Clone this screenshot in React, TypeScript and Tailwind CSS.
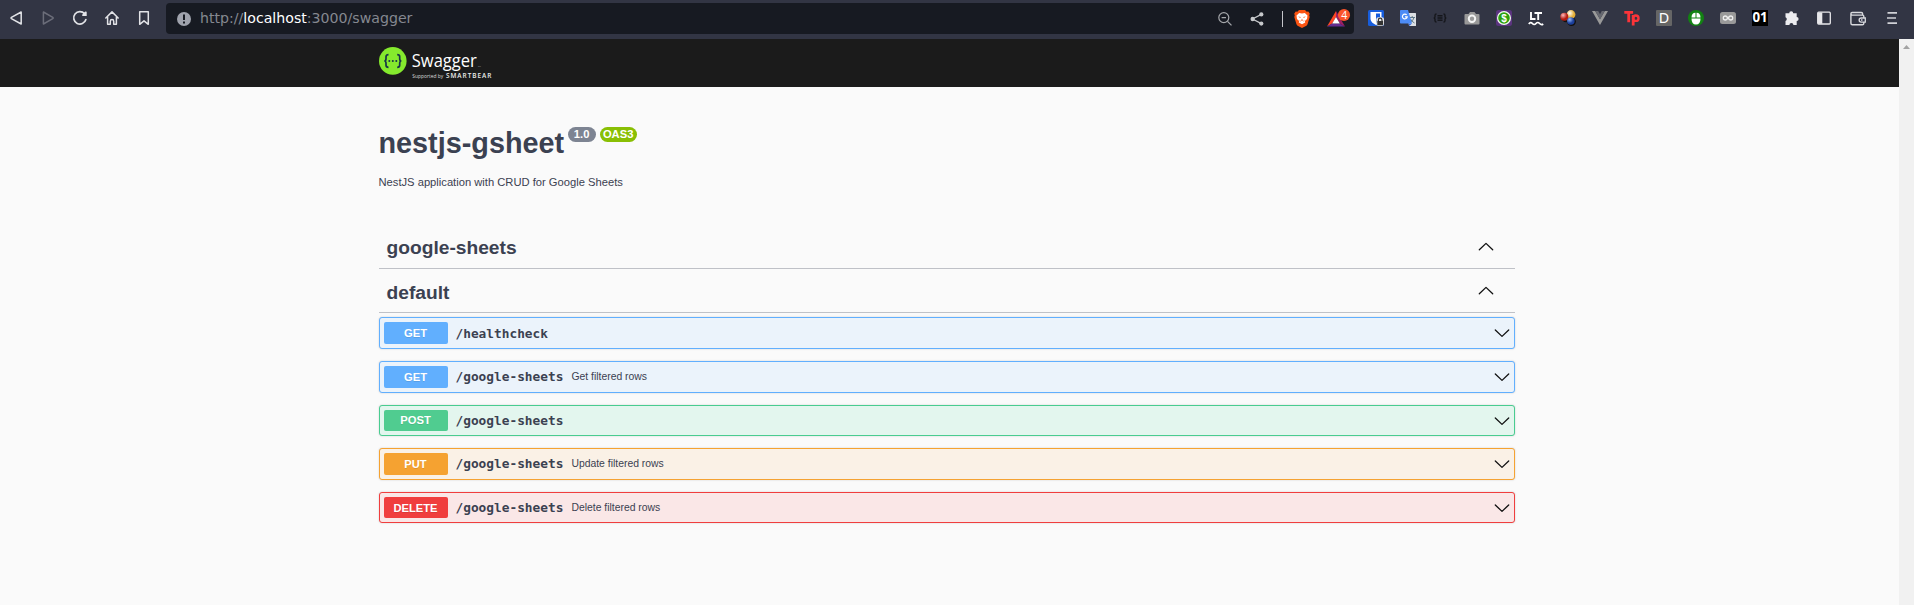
import React from "react";

type Operation = {
  method: string;
  path: string;
  summary?: string;
  row: string;
  badge: string;
  pathOffset?: string;
};

const operations: Operation[] = [
  { method: "GET", path: "/healthcheck", row: "h-8 mb-3 border-[#61affe] bg-[#ebf3fb]", badge: "h-[22px] bg-[#61affe]", pathOffset: "pt-[2px]" },
  { method: "GET", path: "/google-sheets", summary: "Get filtered rows", row: "h-8 mb-3 border-[#61affe] bg-[#ebf3fb]", badge: "h-[22px] bg-[#61affe]" },
  { method: "POST", path: "/google-sheets", row: "h-[31px] mb-3 border-[#49cc90] bg-[#e3f6ee]", badge: "h-[21px] pb-px bg-[#50cc90]" },
  { method: "PUT", path: "/google-sheets", summary: "Update filtered rows", row: "h-8 mb-3 border-[#f5a231] bg-[#faf1e6]", badge: "h-[22px] bg-[#f5a231]" },
  { method: "DELETE", path: "/google-sheets", summary: "Delete filtered rows", row: "h-[31px] border-[#f03e3e] bg-[#fae7e7]", badge: "h-[21px] bg-[#f03e3e]" },
];

function Cell({ children, className = "w-8" }: { children: React.ReactNode; className?: string }) {
  return <span className={`flex h-9 shrink-0 items-center justify-center ${className}`}>{children}</span>;
}

function Svg({ children, size = 16, box = 16 }: { children: React.ReactNode; size?: number; box?: number }) {
  return (
    <svg width={size} height={size} viewBox={`0 0 ${box} ${box}`} fill="none" className="block shrink-0">
      {children}
    </svg>
  );
}

function Chevron({ up = false }: { up?: boolean }) {
  return (
    <svg width="16" height="16" viewBox="0 0 16 16" fill="none" className="block shrink-0">
      <path d={up ? "M1.3 10.8 8 4.4l6.7 6.4" : "M1.3 5 8 11.4l6.7-6.4"} stroke="#111" strokeWidth="1.3" strokeLinejoin="round" strokeLinecap="round" />
    </svg>
  );
}

function NavButtons() {
  const s = { stroke: "#e2e3e7", strokeWidth: 1.5, strokeLinejoin: "round" as const, strokeLinecap: "round" as const };
  return (
    <div className="flex">
      <Cell>
        <Svg><path d="M13.2 2v12L3.4 8.6a.7.7 0 0 1 0-1.2Z" {...s} /></Svg>
      </Cell>
      <Cell>
        <Svg><path d="M3.4 2v12l9.4-5.4a.7.7 0 0 0 0-1.2Z" {...s} stroke="#6b6d79" /></Svg>
      </Cell>
      <Cell>
        <Svg>
          <path d="M13.9 9.6A6.2 6.2 0 1 1 12.6 3.8" {...s} strokeWidth="1.7" />
          <path d="M14.7 1.8v4.3h-3.6a1 1 0 0 1-.7-1.7l1.3-1.5 1.5-1.3Z" fill="#e2e3e7" />
        </Svg>
      </Cell>
      <Cell>
        <Svg><path d="M1.8 8 8 1.9 14.2 8M3.6 7.3v6.9h2.7v-2.9a1.7 1.7 0 0 1 3.4 0v2.9h2.7V7.3" {...s} /></Svg>
      </Cell>
      <Cell>
        <Svg><path d="M3.7 1.7h8.6v12.6L8 10.8l-4.3 3.5Z" {...s} /></Svg>
      </Cell>
    </div>
  );
}

function BraveIcon() {
  return (
    <svg width="16" height="18" viewBox="0 0 16 18" className="block">
      <path d="M5 0h6l1.7 1.8 1.6-.2 1.5 2.1-.6 1.5.5 1.7-2.1 7.2q-.4 1-1.2 1.6L8 18l-4.4-2.3q-.8-.6-1.2-1.6L.3 6.9l.5-1.7-.6-1.5 1.5-2.1 1.6.2Z" fill="#fb5412" />
      <path d="M5.2 3 8 3.5l2.800-.5 2.700 2.500-.5 3.600-2.100 2 .3 1.300L8 14.200l-3.200-1.800.3-1.300-2.100-2-.5-3.600Z" fill="#fff" />
      <path d="m4.200 6.600 2.500.4-.5 1.100Zm7.600 0-2.500.4.5 1.100ZM8 8.400l.8 2.100-.8.5-.8-.5ZM5.600 9.900l1.300 1.400-1 .3Zm4.800 0-1.300 1.400 1 .3Z" fill="#fb5412" />
    </svg>
  );
}

function AddressBar() {
  return (
    <div className="mt-[3px] ml-[6px] flex h-[31px] w-[1188px] items-center rounded-[4px] bg-[#171a22]">
      <svg width="14" height="14" viewBox="0 0 14 14" className="mr-[9px] ml-[11px] block shrink-0">
        <circle cx="7" cy="7" r="7" fill="#a0a3ad" />
        <path d="M6 2.5h2v5.4H6ZM6 9.4h2v2H6Z" fill="#171a22" />
      </svg>
      <span className="pb-[2px] font-['DejaVu_Sans',sans-serif] text-[14.15px] leading-[28px] whitespace-nowrap text-[#858890]">
        http://<span className="text-white">localhost</span>:3000/swagger
      </span>
      <div className="ml-auto flex items-center pr-[1px]">
        <Cell>
          <Svg>
            <circle cx="6.8" cy="6.6" r="5" stroke="#a5a7ab" strokeWidth="1.2" />
            <path d="m10.5 10.4 4 4M4.6 6.6H9" stroke="#a5a7ab" strokeWidth="1.3" />
          </Svg>
        </Cell>
        <Cell>
          <Svg>
            <path d="M12.4 3.4 3.5 8l8.9 4.6" stroke="#c6c8cb" strokeWidth="1.2" />
            <circle cx="12.3" cy="3.4" r="2.1" fill="#c6c8cb" />
            <circle cx="3.7" cy="8" r="2.2" fill="#c6c8cb" />
            <circle cx="12.3" cy="12.6" r="2.1" fill="#c6c8cb" />
          </Svg>
        </Cell>
        <span className="ml-[9px] h-4 w-px bg-[#c4c5ca]" />
        <Cell className="w-[38px]"><BraveIcon /></Cell>
        <Cell className="w-[32px]">
          <svg width="26" height="20" viewBox="-2 0 26 20" className="block overflow-visible">
            <path d="M10 2 1 17.500l5.200-3L10 8Z" fill="#ff4724" />
            <path d="M1 17.500h18l-5.200-3H6.200Z" fill="#662d91" />
            <path d="m10 2 9 15.500-5.200-3L10 8Z" fill="#9e1f63" />
            <path d="M10 8 13.800 14.500H6.200Z" fill="#fff" />
            <circle cx="18" cy="6" r="6.1" fill="#fb542b" />
            <text x="18.2" y="9.600" textAnchor="middle" fill="#fff" fontSize="10.500" fontFamily="Open Sans, sans-serif">4</text>
          </svg>
        </Cell>
      </div>
    </div>
  );
}

function Extensions() {
  return (
    <div className="ml-[6px] flex">
      <Cell>
        <Svg>
          <rect width="16" height="16" rx="1.5" fill="#175ddc" />
          <path d="M2.5 2h11v7c0 2.5-2.5 4.5-5.5 6C5 13.5 2.5 11.5 2.5 9Z" fill="#fff" />
          <path d="M8 3.5h4V9c0 1.5-2 3-4 4Z" fill="#175ddc" />
          <rect x="8.3" y="7.2" width="7.7" height="8.8" rx="2" fill="#e8e8e8" />
          <path d="M10.4 11.5V10a1.8 1.8 0 0 1 3.6 0v1.5" stroke="#333" strokeWidth="1.2" />
          <rect x="9.3" y="11" width="5.8" height="4.3" fill="#333" />
        </Svg>
      </Cell>
      <Cell>
        <Svg>
          <path d="M7 3h8.5q.5 0 .5.5V15.5q0 .5-.5.5H9Z" fill="#dcdfe3" />
          <path d="M9.5 7.5h5.5M12.2 6v1.5M14 7.5q-.5 3-4 5M10.5 9q1 2.5 4 4" stroke="#607988" strokeWidth="1" />
          <path d="m8.5 13.5 3.5 0L9.3 16Z" fill="#3367d6" />
          <path d="M.8 0H8l4 13.5H.8Q0 13.5 0 12.7V.8Q0 0 .8 0Z" fill="#4c8bf5" />
          <path d="M6.700 5A2.400 2.400 0 1 0 7.200 6.800H5" stroke="#fff" strokeWidth="1.200" />
        </Svg>
      </Cell>
      <Cell>
        <Svg>
          <path d="M4.5 4q-1.500 0-1.500 1.300v1.400Q3 8 1.700 8 3 8 3 9.300v1.400Q3 12 4.500 12M11.500 4q1.500 0 1.500 1.300v1.400Q13 8 14.300 8 13 8 13 9.300v1.400q0 1.300-1.500 1.300M5.500 5.800h5M5.500 8h5M5.500 10.200h5" stroke="#15161b" strokeWidth="1.400" />
        </Svg>
      </Cell>
      <Cell>
        <Svg>
          <path d="M1.500 4h3L6 2h4.500L12 4h2.500q1 0 1 1v8.500q0 1-1 1h-13q-1 0-1-1V5q0-1 1-1Z" fill="#999" />
          <circle cx="8" cy="8.800" r="3.200" stroke="#f4f4f4" strokeWidth="2" fill="#999" />
        </Svg>
      </Cell>
      <Cell>
        <Svg>
          <rect width="16" height="16" rx="2.500" fill="#5b347f" />
          <circle cx="8" cy="8" r="6.400" fill="#2da10b" stroke="#f5faf5" strokeWidth="1.200" />
          <text x="8" y="11.500" textAnchor="middle" fill="#fff" fontSize="10" fontWeight="700" fontFamily="Liberation Sans, sans-serif">$</text>
        </Svg>
      </Cell>
      <Cell>
        <Svg>
          <path d="M3 2v7h4.500M6.500 3H14M10.200 3v7" stroke="#fff" strokeWidth="1.900" />
          <path d="M.8 14q1.800-2.500 3.600-.5t3.600 0 3.600 0 3.600.5" stroke="#fff" strokeWidth="1.700" />
        </Svg>
      </Cell>
      <Cell>
        <Svg>
          <defs>
            <radialGradient id="yellow" cx="35%" cy="35%"><stop stopColor="#fff" /><stop offset="1" stopColor="#e5ae35" /></radialGradient>
            <radialGradient id="red" cx="35%" cy="30%"><stop stopColor="#fbb" /><stop offset="1" stopColor="#b51c11" /></radialGradient>
            <radialGradient id="blue" cx="35%" cy="30%"><stop stopColor="#9bbcf7" /><stop offset="1" stopColor="#1b3f9c" /></radialGradient>
          </defs>
          <circle cx="6" cy="8" r="4.300" fill="#111" />
          <circle cx="11.500" cy="11.600" r="4.400" fill="#111" />
          <circle cx="11" cy="4.500" r="4.400" fill="url(#yellow)" />
          <circle cx="4.300" cy="6.800" r="4" fill="url(#red)" />
          <circle cx="10.800" cy="11" r="3.800" fill="url(#blue)" />
        </Svg>
      </Cell>
      <Cell>
        <Svg>
          <path d="M0 1h3.200L8 9.300 12.800 1H16L8 15Z" fill="#999" />
          <path d="M3.200 1h3L8 4.200 9.800 1h3L8 9.300Z" fill="#666870" />
        </Svg>
      </Cell>
      <Cell>
        <Svg>
          <path d="M.3 2.400h8.800M4.700 2.400v9.800M9.200 5v10.500" stroke="#fb3439" strokeWidth="2.800" />
          <circle cx="11.800" cy="8.200" r="2.700" stroke="#fb3439" strokeWidth="2.400" />
        </Svg>
      </Cell>
      <Cell>
        <span className="flex h-4 w-4 items-center justify-center rounded-[1px] bg-[#666] font-['DejaVu_Sans',sans-serif] text-[13.5px] leading-4 text-white">D</span>
      </Cell>
      <Cell>
        <Svg>
          <circle cx="8" cy="8" r="8" fill="#128212" />
          <path d="M3.500 7.400Q3.500 3 7.500 2.800v4.600ZM8.500 2.800q4 .2 4 4.600h-4ZM3.500 8.400h9q0 6-4.500 6t-4.500-6Z" fill="#fff" />
        </Svg>
      </Cell>
      <Cell>
        <Svg>
          <rect y="2" width="16" height="12" rx="2.500" fill="#999" />
          <path d="M8 8C6.500 6 5.600 6 5.300 6a2 2 0 0 0 0 4C5.600 10 6.500 10 8 8s2.400-2 2.700-2a2 2 0 0 1 0 4C10.400 10 9.500 10 8 8Z" stroke="#eee" strokeWidth="1.300" />
        </Svg>
      </Cell>
      <Cell>
        <span className="flex h-4 w-4 items-center justify-center bg-black pb-[2px] font-['Noto_Sans',sans-serif] text-[13.3px] leading-[14px] font-bold text-white">01</span>
      </Cell>
      <Cell>
        <Svg>
          <path d="M5.200 3.300a2 2 0 1 1 4 0h3.500v3.800a1.900 1.900 0 1 1 0 3.800v4H9.400a2 2 0 0 0-4 0H1.500v-4a1.900 1.900 0 0 0 0-3.600v-4Z" fill="#ececef" />
        </Svg>
      </Cell>
      <Cell>
        <Svg>
          <rect x="1.700" y="2.200" width="12.600" height="11.800" rx="1" stroke="#e7e7ea" strokeWidth="1.300" />
          <path d="M2 2.500h4.300v11.300H2Z" fill="#e7e7ea" />
        </Svg>
      </Cell>
      <Cell className="w-9">
        <Svg>
          <path d="M.9 3.700v9.600q0 1.500 1.500 1.500h10q1.400 0 1.400-1.400V6.300q0-1.200-1.200-1.200H2.300Q.9 5.100.9 3.700q0-1.200 1.200-1.200h9.200q1.300 0 1.300 1.300v1.300" stroke="#d8d9dd" strokeWidth="1.400" />
          <path d="M15.300 8h-4.100a2 2 0 0 0 0 4.100h4.100Z" fill="#32354a" stroke="#d8d9dd" strokeWidth="1.300" />
          <path d="M11 10h1.500" stroke="#d8d9dd" strokeWidth="1.300" />
        </Svg>
      </Cell>
      <Cell>
        <Svg><path d="M3.500 2.800H13M3 8h9M3.500 13.200H13" stroke="#d0d1d6" strokeWidth="1.700" /></Svg>
      </Cell>
    </div>
  );
}

function Logo() {
  return (
    <svg width="114" height="34" viewBox="0 0 114 34" className="block">
      <circle cx="13.800" cy="13.900" r="13.800" fill="#85ea2d" />
      <g stroke="#173647" strokeWidth="1.700" fill="none">
        <path d="M9.500 7.700q-2.500 0-2.500 2v2q0 2.300-1.700 2.300 1.700 0 1.700 2.300v2q0 2 2.500 2M18.200 7.700q2.500 0 2.500 2v2q0 2.300 1.700 2.300-1.700 0-1.700 2.300v2q0 2-2.500 2" />
      </g>
      <g fill="#173647"><circle cx="10.300" cy="14" r="1" /><circle cx="13.800" cy="14" r="1" /><circle cx="17.300" cy="14" r="1" /></g>
      <g fill="#fff" fontFamily="Open Sans, sans-serif">
        <text x="32.800" y="20" fontSize="18.500" fontWeight="400" textLength="65" lengthAdjust="spacingAndGlyphs">Swagger</text>
        <text x="99" y="19.500" fontSize="2" fill="#aaa">TM</text>
        <text x="33.300" y="30.600" fontSize="5.800" textLength="31" lengthAdjust="spacingAndGlyphs" fill="#ddd">Supported by</text>
        <text x="67" y="30.600" fontSize="6.400" fontWeight="600" textLength="45.300" lengthAdjust="spacing" fill="#eee">SMARTBEAR</text>
      </g>
    </svg>
  );
}

export default function App() {
  return (
    <div className="flex h-[605px] w-[1914px] flex-col overflow-hidden bg-[#fafafa] font-['Liberation_Sans',Arial,sans-serif] text-[#3b4151]">
      <header className="flex h-[39px] shrink-0 bg-[#323544]">
        <NavButtons />
        <AddressBar />
        <Extensions />
      </header>

      <div className="flex flex-1">
        <main className="flex w-[1899px] flex-col">
          <div className="h-12 bg-[#1b1b1b] pt-2 pl-[379px]">
            <Logo />
          </div>

          <div className="ml-[378.5px] w-[1136px]">
            <section className="pt-[38px]">
              <div className="flex items-start">
                <h1 className="text-[28.8px] leading-9 font-bold whitespace-nowrap">nestjs-gsheet</h1>
                <span className="mt-[2px] ml-[3.5px] flex h-[15px] w-7 items-center justify-center rounded-full bg-[#7d8492] text-[11.2px] leading-[15px] font-bold text-white">1.0</span>
                <span className="mt-[2px] ml-1 flex h-[15px] w-[37px] items-center justify-center rounded-full bg-[#89bf04] text-[11.2px] leading-[15px] font-bold text-white">OAS3</span>
              </div>
              <p className="mt-[13px] text-[11.2px] leading-4">NestJS application with CRUD for Google Sheets</p>
            </section>

            <section className="mt-[35px]">
              <h2 className="flex h-[44px] items-center border-b border-[#bfc1c7] pr-[21px] pl-2 text-[19.2px] leading-6 font-bold">
                <span className="flex-1 pt-[2px]">google-sheets</span>
                <Chevron up />
              </h2>
              <h2 className="flex h-[44px] items-center border-b border-[#bfc1c7] pr-[21px] pl-2 text-[19.2px] leading-6 font-bold">
                <span className="flex-1 pt-[4px]">default</span>
                <Chevron up />
              </h2>
              <div className="mt-1">
                {operations.map((op, i) => (
                  <div key={i} className={`flex items-center rounded-[3px] border pr-[4px] pl-[4px] shadow-[0_0_2px_rgba(0,0,0,0.19)] ${op.row}`}>
                    <span className={`flex w-16 items-center justify-center rounded-[2px] text-[11.2px] leading-4 font-bold text-white [text-shadow:0_1px_0_rgba(0,0,0,0.1)] ${op.badge}`}>{op.method}</span>
                    <span className={`ml-2 font-['DejaVu_Sans_Mono',monospace] text-[12.8px] leading-4 font-bold ${op.pathOffset ?? ""}`}>{op.path}</span>
                    <span className="ml-2 flex-1 text-[10.4px] leading-4">{op.summary}</span>
                    <Chevron />
                  </div>
                ))}
              </div>
            </section>
          </div>
        </main>

        <div className="flex w-[15px] justify-center bg-[#f1f1f1] pt-[6px]">
          <svg width="7" height="4" viewBox="0 0 7 4" className="block"><path d="M3.500 0 7 4H0Z" fill="#a3a3a3" /></svg>
        </div>
      </div>
    </div>
  );
}
